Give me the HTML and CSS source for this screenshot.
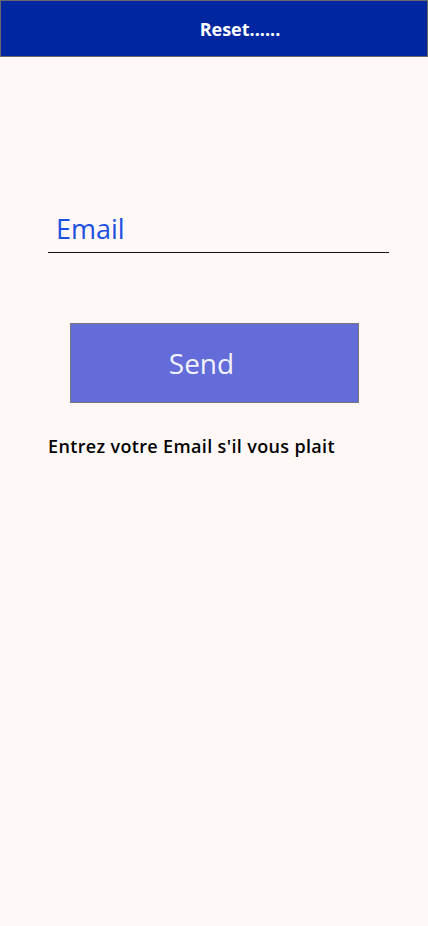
FILE: index.html
```html
<!DOCTYPE html>
<html>
<head>
<meta charset="utf-8">
<link rel="stylesheet" href="styles.css">
</head>
<body>
<header class="bar"><span class="title">Reset......</span></header>
<main class="content">
  <div class="field"><span class="placeholder">Email</span></div>
  <button class="send">Send</button>
  <p class="hint">Entrez votre Email s'il vous plait</p>
</main>
</body>
</html>
```
FILE: styles.css
```css
html, body {
  margin: 0;
  padding: 0;
  background: #fff8f7;
  font-family: "Open Sans", "Noto Sans", sans-serif;
}
.bar {
  box-sizing: border-box;
  height: 57px;
  background: #0026a0;
  border: 1px solid #6a6a6a;
  display: flex;
  align-items: center;
  justify-content: center;
  padding-left: 52px;
}
.title {
  color: #ffffff;
  font-weight: 700;
  font-size: 18px;
}
.content {
  display: flex;
  flex-direction: column;
  padding: 0 39px 0 48px;
}
.field {
  margin-top: 151px;
  height: 44px;
  border-bottom: 1px solid #111;
  display: flex;
  align-items: flex-end;
  padding-left: 8px;
}
.placeholder {
  color: #1a4fe0;
  font-size: 27px;
  line-height: 36px;
  padding-bottom: 5px;
}
.send {
  margin: 70px 0 0 22px;
  width: 289px;
  height: 80px;
  box-sizing: border-box;
  background: #636cd8;
  border: 1px solid #777;
  color: #f2f2ff;
  font-family: inherit;
  font-size: 28px;
  padding: 0 26px 0 0;
}
.hint {
  margin: 31px 0 0 0;
  font-size: 18px;
  color: #000;
  font-weight: 600;
  letter-spacing: 0.35px;
}
```
